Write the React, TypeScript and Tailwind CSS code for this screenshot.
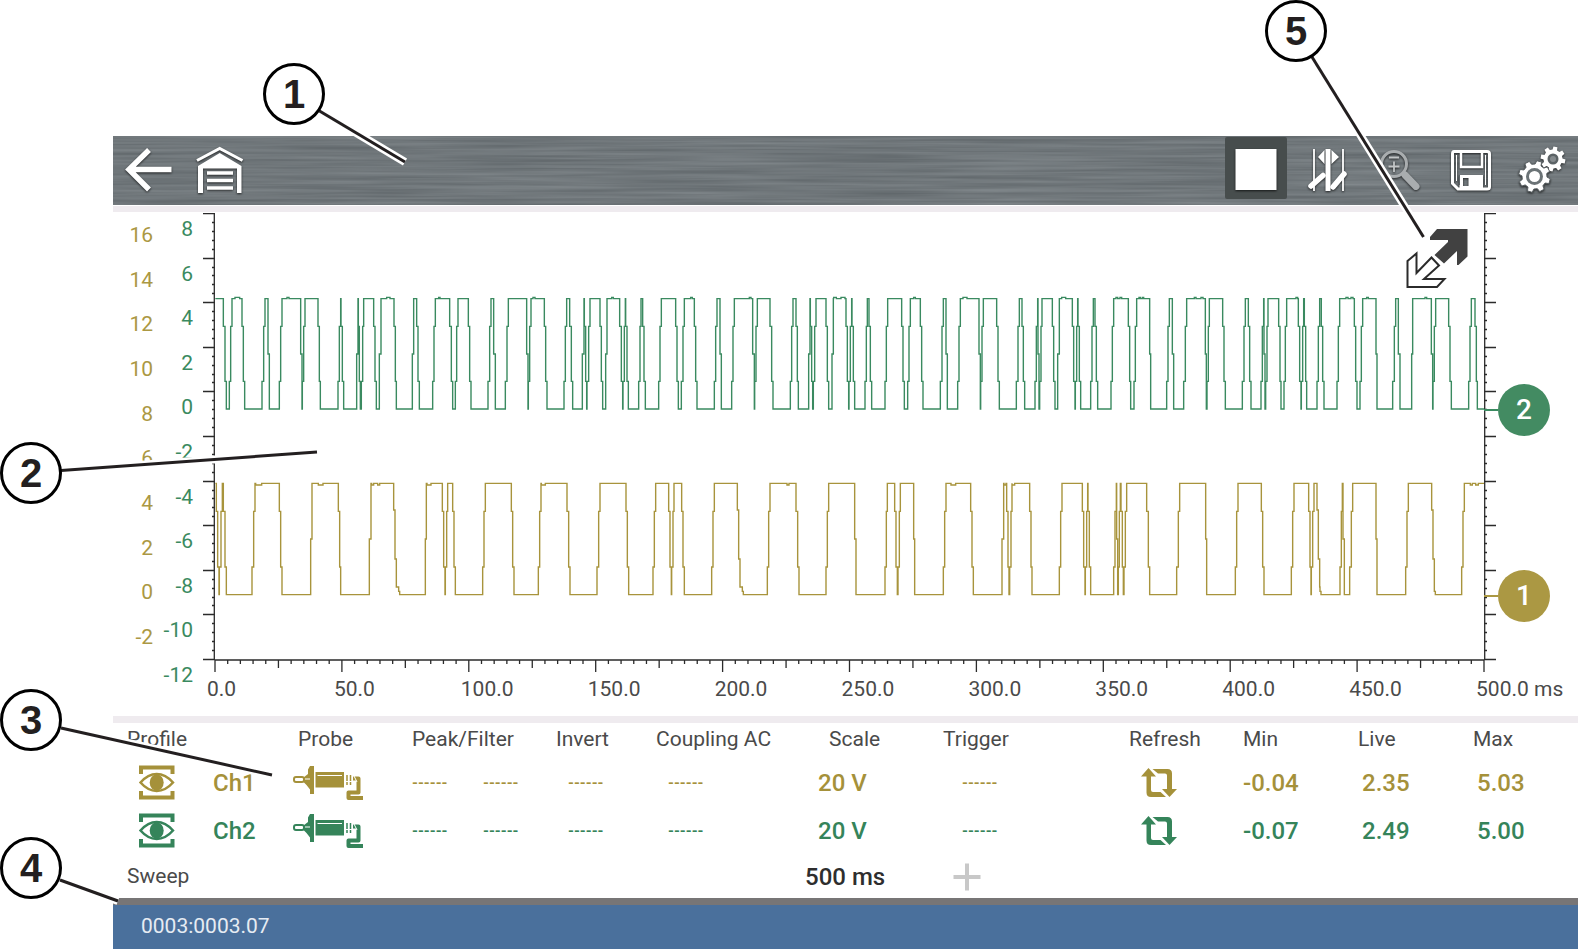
import type { ReactNode } from "react";

const GOLD_SCALE = ["16", "14", "12", "10", "8", "6", "4", "2", "0", "-2"];
const GREEN_SCALE = ["8", "6", "4", "2", "0", "-2", "-4", "-6", "-8", "-10", "-12"];
const TIME_SCALE = ["0.0", "50.0", "100.0", "150.0", "200.0", "250.0", "300.0", "350.0", "400.0", "450.0", "500.0 ms"];

// Sweep is stored as [start, end] plateaus that alternate high, low, high, ...
const CH2_PLATEAUS = [
  1, 25, 34, 43, 51, 81, 89, 141, 150, 159, 163, 193, 201, 257, 261, 262, 270, 309, 316, 369, 377, 378, 386, 425,
  429, 430, 436, 439, 446, 476, 484, 493, 498, 537, 544, 592, 596, 605, 613, 653, 661, 704, 713, 721, 729, 760,
  768, 819, 828, 836, 841, 871, 880, 935, 939, 940, 948, 988, 996, 1047, 1055, 1064, 1073, 1102, 1107, 1108,
  1115, 1116, 1125, 1155, 1163, 1172, 1176, 1214, 1223, 1224, 1231, 1232, 1240, 1271, 1278, 1283, 1291, 1331,
  1339, 1382, 1390, 1399, 1408, 1438, 1446, 1498, 1506, 1515, 1519, 1550, 1558, 1613, 1618, 1619, 1627, 1665,
  1674, 1726, 1734, 1743, 1750, 1781, 1785, 1786, 1793, 1795, 1803, 1833, 1841, 1851, 1855, 1893, 1901, 1902,
  1910, 1911, 1919, 1950, 1957, 1962, 1970, 2010, 2018, 2060, 2068, 2078, 2086, 2116, 2124, 2176, 2185, 2193,
  2197, 2228, 2236, 2292, 2296, 2297, 2305, 2345, 2353, 2404, 2413, 2421, 2429, 2460, 2468, 2469, 2472, 2474,
  2481, 2512, 2520, 2528, 2533, 2572, 2580, 2581, 2588, 2589, 2597, 2627, 2635, 2640, 2648, 2688, 2696, 2740,
  2747, 2757, 2765, 2804, 2807, 2855, 2863, 2872, 2876, 2906, 2915, 2971, 2974, 2976, 2983, 3023, 3031, 3082,
  3091, 3100, 3108, 3138, 3146, 3147, 3150, 3152, 3159, 3191, 3198, 3207, 3215, 3250, 3258, 3259, 3266, 3268,
  3275, 3306, 3314, 3319, 3327, 3366, 3374, 3418, 3426, 3435, 3443, 3483, 3486, 3533, 3542, 3550, 3555, 3590,
  3593, 3649, 3653, 3654, 3662, 3701, 3709, 3761, 3769, 3780, 3787, 3807,
];
const CH1_PLATEAUS = [
  1, 4, 12, 13, 22, 25, 34, 111, 120, 193, 201, 287, 291, 370, 377, 463, 468, 536, 554, 631, 634, 682, 690, 691,
  698, 713, 721, 803, 811, 889, 897, 970, 978, 1056, 1065, 1146, 1155, 1233, 1241, 1314, 1322, 1361, 1369, 1370,
  1377, 1400, 1408, 1490, 1498, 1567, 1585, 1657, 1665, 1743, 1752, 1833, 1841, 1919, 1923, 2010, 2017, 2039,
  2047, 2049, 2056, 2096, 2099, 2185, 2193, 2267, 2275, 2361, 2366, 2375, 2382, 2384, 2391, 2444, 2451, 2533,
  2541, 2602, 2610, 2611, 2618, 2619, 2627, 2696, 2704, 2705, 2708, 2710, 2716, 2718, 2725, 2727, 2735, 2795,
  2804, 2885, 2894, 2972, 2975, 3061, 3069, 3139, 3147, 3229, 3237, 3281, 3288, 3289, 3297, 3306, 3318, 3375,
  3382, 3384, 3388, 3404, 3413, 3483, 3486, 3572, 3580, 3650, 3661, 3740, 3748, 3807,
];
const CH2_RIPPLE = [
  [60, 74], [216, 222], [515, 525], [671, 675], [954, 960], [1190, 1195], [1427, 1432], [1603, 1608],
  [1856, 1864], [1878, 1890], [2096, 2101], [2244, 2256], [2540, 2552], [2703, 2708], [2715, 2720],
  [2772, 2776], [2782, 2786], [2938, 2943], [2958, 2964], [3243, 3248], [3393, 3399], [3408, 3414],
  [3455, 3460], [3630, 3635],
];
const CH1_RIPPLE = [
  [122, 140], [310, 324], [470, 476], [488, 494], [636, 648], [979, 991], [1716, 1722], [2208, 2222],
  [2367, 2373], [2391, 2399], [3766, 3772], [3782, 3790],
];

function tracePath(plateaus: number[], hi: number, lo: number, ripples: number[][], ripple: number) {
  let d = "";
  for (let i = 0; i < plateaus.length; i += 2) {
    const [start, end, next] = [plateaus[i], plateaus[i + 1], plateaus[i + 2]];
    const isHigh = (i / 2) % 2 === 0;
    const from = isHigh ? hi : lo;
    const to = isHigh ? lo : hi;
    d += i === 0 ? `M${start} ${from}` : `H${start}V${from}`;
    if (isHigh) {
      ripples
        .filter(([a, b]) => a >= start && b <= end)
        .forEach(([a, b]) => (d += `H${a}V${from + ripple}H${b}V${from}`));
    }
    d += `H${end}`;
    if (next === undefined) break;
    const at = (f: number) => Math.round(from + (to - from) * f);
    const gap = next - end;
    if (gap <= 5) d += `V${at(0.5)}`;
    else if (gap > 10) d += `V${at(0.24)}H${end + 4}V${at(0.68)}H${end + 8}V${at(0.93)}H${next - 3}V${at(0.97)}`;
    else d += `V${at(0.25)}H${end + Math.round(gap / 2)}V${at(0.75)}`;
  }
  return d;
}

function gearPath(cx: number, cy: number, outer: number, inner: number, teeth: number, turn: number) {
  const points: string[] = [];
  const step = (Math.PI * 2) / teeth;
  for (let i = 0; i < teeth; i++) {
    const a = i * step + turn;
    [[-0.32, inner], [-0.2, outer], [0.2, outer], [0.32, inner]].forEach(([k, r]) => {
      points.push(`${(cx + Math.cos(a + k * step) * r).toFixed(1)} ${(cy + Math.sin(a + k * step) * r).toFixed(1)}`);
    });
  }
  return `M${points.join("L")}Z`;
}

function ToolButton({ label, active, children }: { label: string; active?: boolean; children: ReactNode }) {
  return (
    <button
      type="button"
      aria-label={label}
      className={active ? "size-[62px] shrink-0 rounded-xs bg-[#474d4d]" : "size-[62px] shrink-0"}
    >
      <svg viewBox="0 0 62 62" className="size-full drop-shadow-[0_1px_1px_rgba(0,0,0,0.7)]" fill="none">
        {children}
      </svg>
    </button>
  );
}

function Toolbar() {
  return (
    <header className="relative flex h-[69px] items-start justify-between bg-[#70777b] pt-px pr-[3px] pl-[5px]">
      {/* brushed metal */}
      <svg className="absolute inset-0 size-full opacity-15" aria-hidden="true">
        <filter id="brushed" x="0" y="0" width="100%" height="100%" colorInterpolationFilters="sRGB">
          <feTurbulence type="fractalNoise" baseFrequency="0.006 0.3" numOctaves="3" seed="8" />
          <feColorMatrix values="1 0 0 0 -0.05  1 0 0 0 -0.03  1 0 0 0 -0.02  0 0 0 0 1" />
        </filter>
        <rect width="100%" height="100%" filter="url(#brushed)" />
      </svg>
      <div className="relative flex gap-[10px]">
        <ToolButton label="Back">
          <path d="M53.500 32.500H11.500M31 13L11 32.500L31 52.500" stroke="#fff" strokeWidth="5.500" />
        </ToolButton>
        <ToolButton label="Home">
          <path d="M7 23.500L29.700 11.500L52.500 23.500" stroke="#fff" strokeWidth="3" />
          <path d="M8 29L29.700 16L51.500 29V56H47V31.500H13V56H8Z" fill="#fff" />
          <path d="M17 36H43M17 43.500H43M17 51H43" stroke="#fff" strokeWidth="3.600" />
        </ToolButton>
      </div>
      <div className="relative flex gap-[10px]">
        <ToolButton label="Stop" active>
          <path d="M10.500 12H51.500V53H10.500Z" fill="#fff" />
        </ToolButton>
        <ToolButton label="Cursors">
          <path d="M17 12V54M46 12V54" stroke="#fff" strokeWidth="1.800" />
          <path d="M28.500 12H33.500V54H28.500Z" fill="#fff" />
          <path d="M27.500 13V27L21 20ZM34.500 13V27L42 20Z" fill="#fff" />
          <path d="M14 49L26 38.500" stroke="#fff" strokeWidth="5.500" strokeLinecap="round" />
          <path d="M36 50L47 37" stroke="#fff" strokeWidth="5.500" strokeLinecap="round" />
        </ToolButton>
        <ToolButton label="Zoom">
          <circle cx="25" cy="27" r="12.500" stroke="#a9adaf" strokeWidth="3" />
          <path d="M36 38L47 49.500" stroke="#a9adaf" strokeWidth="7" strokeLinecap="round" />
          <path d="M20 20.500H30M19.500 29.500H30.500M25 24.500V35" stroke="#c3c6c7" strokeWidth="1.800" />
        </ToolButton>
        <ToolButton label="Save">
          <path
            d="M13 14.500H46Q48.500 14.500 48.500 17V50Q48.500 52 46 52H17L11.500 46.500V17Q11.500 14.500 13 14.500Z"
            stroke="#fff"
            strokeWidth="3"
          />
          <path d="M15.500 18V44M44.500 18V48" stroke="#fff" strokeWidth="1" />
          <path d="M20 15V30H41V15" stroke="#fff" strokeWidth="2.500" />
          <path fillRule="evenodd" d="M18.500 38H42V52H18.500ZM22 41V49H27.500V41Z" fill="#fff" />
          <path d="M18.500 38V48" stroke="#5c6366" strokeWidth="1" />
        </ToolButton>
        <ToolButton label="Settings">
          <path d={gearPath(40, 22, 12.5, 9.5, 8, 0.2)} fill="#fff" />
          <circle cx="40" cy="22" r="5.500" fill="#5c6366" />
          <circle cx="40" cy="22" r="3" fill="#858b8e" />
          <path d={gearPath(21.5, 39.5, 16, 12.5, 8, 0.3)} fill="#fff" stroke="#5c6366" strokeWidth="1" />
          <circle cx="21.500" cy="39.500" r="8.500" fill="#6b7376" />
          <circle cx="21.500" cy="39.500" r="5.500" fill="#fff" />
        </ToolButton>
      </div>
    </header>
  );
}

function SideAxis({ flip }: { flip?: boolean }) {
  const ticks = Array.from({ length: 51 }, (_, i) => {
    const y = Math.round(i * 8.92) + 0.5;
    const length = i % 5 === 0 ? 12 : 3;
    return flip ? `M0 ${y}H${length}` : `M12 ${y}H${12 - length}`;
  });
  return (
    <svg viewBox="0 0 12 448" className="h-[448px] w-3 shrink-0" fill="none" stroke="#2b2b2b" strokeWidth="1.300">
      <path d={ticks.join("") + (flip ? "M0.700 0V447" : "M11.300 0V447")} />
    </svg>
  );
}

function TimeAxis() {
  const ticks = Array.from({ length: 101 }, (_, i) => {
    const x = i * 38.07;
    return `M${x.toFixed(1)} 0V${i % 10 === 0 ? 12 : i % 5 === 0 ? 8 : 4}`;
  });
  return (
    <svg
      viewBox="0 0 3807 12"
      preserveAspectRatio="none"
      className="block h-3 w-full overflow-visible"
      fill="none"
      stroke="#2b2b2b"
      strokeWidth="1.300"
    >
      <path d={"M0 0H3807" + ticks.join("")} vectorEffect="non-scaling-stroke" />
    </svg>
  );
}

function Chart() {
  return (
    <section className="flex h-[504px] pt-px text-[21px] leading-6">
      <div className="mt-[10px] flex h-[426px] w-10 flex-col justify-between text-right text-[#ab9843]">
        {GOLD_SCALE.map((v) => (
          <span key={v}>{v}</span>
        ))}
      </div>
      <div className="mt-[4px] flex h-[470px] w-10 flex-col justify-between text-right text-[#3a8a60]">
        {GREEN_SCALE.map((v) => (
          <span key={v}>{v}</span>
        ))}
      </div>
      <div className="flex w-[22px] justify-end">
        <SideAxis />
      </div>
      <div className="relative min-w-0 flex-1">
        <svg viewBox="0 0 3807 1341" preserveAspectRatio="none" className="block h-[447px] w-full" fill="none">
          <path
            d={tracePath(CH2_PLATEAUS, 257, 588, CH2_RIPPLE, -4)}
            stroke="#3a8a60"
            strokeWidth="1.400"
            vectorEffect="non-scaling-stroke"
          />
          <path
            d={tracePath(CH1_PLATEAUS, 811, 1145, CH1_RIPPLE, 5)}
            stroke="#a8943c"
            strokeWidth="1.400"
            vectorEffect="non-scaling-stroke"
          />
        </svg>
        <TimeAxis />
        <div className="mt-[5px] mr-2 -ml-2 flex text-[#4a4a4a]">
          {TIME_SCALE.map((v) => (
            <span key={v} className="flex-1 whitespace-nowrap last:w-0 last:flex-none">
              {v}
            </span>
          ))}
        </div>
        <button type="button" aria-label="Expand view" className="absolute top-[16px] right-[16px]">
          <svg viewBox="0 0 62 60" className="h-[60px] w-[62px]" fill="none">
            <path d="M31 0H61.500V27.500L52.500 36H51V22L38 34.500L28.500 26L42 13V11H24V8Z" fill="#414141" />
            <path
              d="M1.500 32L10.500 24.500V44L25.500 28.500L33 36.500L18 50H38.500L31 58H1.500Z"
              fill="#fff"
              stroke="#2b2b2b"
              strokeWidth="2"
            />
          </svg>
        </button>
      </div>
      <div className="relative w-[94px]">
        <SideAxis flip />
        <div className="absolute top-[171px] left-0 flex items-center text-[28px] font-medium text-white">
          <span className="h-[2px] w-[14px] bg-[#3a8a60]" />
          <button type="button" className="size-[52px] rounded-full bg-[#438b62]">
            2
          </button>
        </div>
        <div className="absolute top-[357px] left-0 flex items-center text-[28px] font-medium text-white">
          <span className="h-[2px] w-[14px] bg-[#ab9843]" />
          <button type="button" className="size-[52px] rounded-full bg-[#ab9843]">
            1
          </button>
        </div>
      </div>
    </section>
  );
}

function EyeIcon() {
  return (
    <svg viewBox="0 0 36 36" className="size-9" fill="none" stroke="currentColor">
      <path d="M2 9V2.500H33.500V9M2 26V32.500H33.500V26" strokeWidth="4" />
      <path d="M1.500 17.500Q9 9 17.700 9Q26.500 9 34 17.500Q26.500 26 17.700 26Q9 26 1.500 17.500Z" strokeWidth="2.500" />
      <ellipse cx="17.700" cy="17.500" rx="7" ry="8" fill="currentColor" stroke="none" />
    </svg>
  );
}

function ProbeIcon() {
  return (
    <svg viewBox="0 0 70 36" className="h-9 w-[70px]" fill="none" stroke="currentColor">
      <rect x="1" y="12" width="10" height="5" rx="2" strokeWidth="2" />
      <path d="M10.500 12.500L15 9V4.500L17 1H21V29H17V24.500L13.500 20L10.500 17Z" fill="currentColor" stroke="none" />
      <path d="M12 14H17" stroke="#fff" strokeWidth="1" />
      <path d="M22.500 7H51V22.500H22.500Z" fill="currentColor" stroke="none" />
      <path d="M24.500 10.500H49" stroke="#fff" strokeWidth="1" />
      <path d="M54 10V20M57.500 10V20" strokeWidth="1.500" strokeDasharray="6 1" />
      <path d="M60 13.500H65.500V27.500H55.500V33H70" strokeWidth="4" strokeLinejoin="round" />
      <path d="M61 11L64 17" stroke="#fff" strokeWidth="1" />
    </svg>
  );
}

function RefreshIcon() {
  return (
    <svg viewBox="0 0 36 30" className="h-[30px] w-9" fill="currentColor">
      <path d="M7.500 0L15 8.500H10V22Q10 24 12 24H19.500L25 29H10Q5.500 29 5.500 24.500V8.500H0Z" />
      <path d="M28.500 29L36 21H31V5.500Q31 1 26.500 1H11.500L17 5.500H24Q26 5.500 26 7.500V21H21Z" />
    </svg>
  );
}

const CHANNELS = [
  { name: "Ch1", scale: "20 V", min: "-0.04", live: "2.35", max: "5.03", color: "text-[#a5913a]" },
  { name: "Ch2", scale: "20 V", min: "-0.07", live: "2.49", max: "5.00", color: "text-[#35845a]" },
];

function Dashes() {
  return <span className="block text-[15px] font-bold">------</span>;
}

function ChannelTable() {
  return (
    <table className="w-full table-fixed text-left text-[24px] font-medium whitespace-nowrap">
      <colgroup>
        <col className="w-[90px]" />
        <col className="w-[85px]" />
        <col className="w-[114px]" />
        <col className="w-[71px]" />
        <col className="w-[73px]" />
        <col className="w-[100px]" />
        <col className="w-[149px]" />
        <col className="w-[138px]" />
        <col className="w-[186px]" />
        <col className="w-[114px]" />
        <col className="w-[115px]" />
        <col className="w-[115px]" />
        <col className="w-[115px]" />
      </colgroup>
      <thead className="text-[21px] leading-8 text-[#4a4a4a]">
        <tr className="h-9 align-top *:font-normal">
          <th className="pl-[14px]" colSpan={2}>Profile</th>
          <th className="pl-[10px]">Probe</th>
          <th className="pl-[10px]" colSpan={2}>Peak/Filter</th>
          <th className="pl-[10px]">Invert</th>
          <th className="pl-[10px]">Coupling AC</th>
          <th className="pl-[34px]">Scale</th>
          <th className="pl-[10px]">Trigger</th>
          <th className="pl-[10px]">Refresh</th>
          <th className="pl-[10px]">Min</th>
          <th className="pl-[10px]">Live</th>
          <th className="pl-[10px]">Max</th>
        </tr>
      </thead>
      <tbody>
        {CHANNELS.map((ch) => (
          <tr key={ch.name} className={`h-12 ${ch.color}`}>
            <td className="pl-[26px]">
              <button type="button" aria-label={`Show ${ch.name}`} className="block">
                <EyeIcon />
              </button>
            </td>
            <td className="pl-[10px]">{ch.name}</td>
            <td className="pl-[5px]">
              <button type="button" aria-label={`${ch.name} probe`} className="block">
                <ProbeIcon />
              </button>
            </td>
            <td className="pl-[10px]"><Dashes /></td>
            <td className="pl-[10px]"><Dashes /></td>
            <td className="pl-[22px]"><Dashes /></td>
            <td className="pl-[22px]"><Dashes /></td>
            <td className="pl-[23px]">{ch.scale}</td>
            <td className="pl-[29px]"><Dashes /></td>
            <td className="pl-[22px]">
              <button type="button" aria-label={`Refresh ${ch.name}`} className="block">
                <RefreshIcon />
              </button>
            </td>
            <td className="pl-[10px]">{ch.min}</td>
            <td className="pl-[14px]">{ch.live}</td>
            <td className="pl-[14px]">{ch.max}</td>
          </tr>
        ))}
        <tr className="h-[43px] text-[#2e2e2e]">
          <th className="pl-[14px] text-[21px] font-normal text-[#4a4a4a]" colSpan={7}>Sweep</th>
          <td className="pl-[10px]">500 ms</td>
          <td className="pl-5" colSpan={5}>
            <button type="button" aria-label="Add trigger" className="block">
              <svg viewBox="0 0 28 28" className="size-7" stroke="#c8c8c8" strokeWidth="4">
                <path d="M0.500 14H27.500M14 0.500V27.500" />
              </svg>
            </button>
          </td>
        </tr>
      </tbody>
    </table>
  );
}

const CALLOUTS = [
  { n: 1, cx: 294, cy: 94, line: "M319.500 111L405 162" },
  { n: 2, cx: 31, cy: 473, line: "M61 470.500L317 452" },
  { n: 3, cx: 31, cy: 720, line: "M61 728L272 775" },
  { n: 4, cx: 31, cy: 868, line: "M60 880L118 901" },
  { n: 5, cx: 1296, cy: 31, line: "M1312 57L1423.500 237" },
];

function Callouts() {
  return (
    <svg className="pointer-events-none absolute inset-0 size-full" fill="none">
      {CALLOUTS.map(({ n, cx, cy, line }) => (
        <g key={n}>
          <path d={line} stroke="#fff" strokeWidth="8" />
          <path d={line} stroke="#231f20" strokeWidth="3" />
          <circle cx={cx} cy={cy} r="29.500" fill="#fff" stroke="#000" strokeWidth="3" />
          <text
            x={cx}
            y={cy + 14}
            textAnchor="middle"
            fill="#231f20"
            className="font-['Liberation_Sans',sans-serif] text-[40px] font-bold"
          >
            {n}
          </text>
        </g>
      ))}
    </svg>
  );
}

export default function App() {
  return (
    <div className="relative min-h-screen bg-white pt-[136px] pr-[6px] pl-[113px] font-[Roboto,sans-serif]">
      <Toolbar />
      <div className="mt-px h-[6px] bg-[#efebef]" />
      <Chart />
      <div className="h-[7px] bg-[#efebef]" />
      <ChannelTable />
      <div className="h-[7px] bg-[#777576]" />
      <footer className="h-11 bg-[#4a709c] pl-7 text-[21px] leading-[43px] text-[#e6ecf3]">0003:0003.07</footer>
      <Callouts />
    </div>
  );
}
